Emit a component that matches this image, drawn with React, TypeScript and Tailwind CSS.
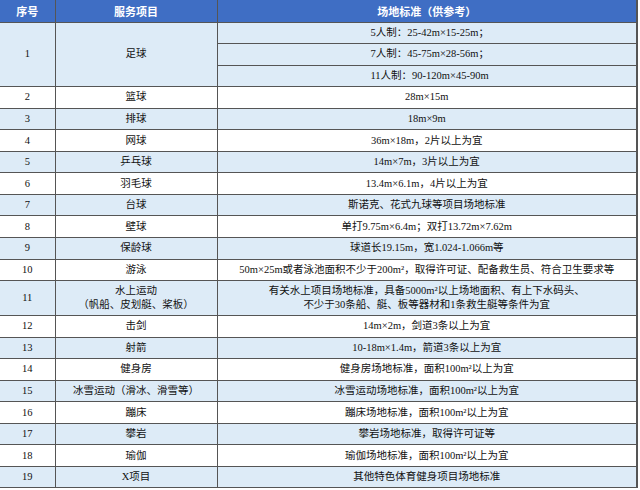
type Row = { no: string; name: React.ReactNode; spec: React.ReactNode; tall?: boolean };

const rows: Row[] = [
  { no: "2", name: "篮球", spec: "28m×15m" },
  { no: "3", name: "排球", spec: "18m×9m" },
  { no: "4", name: "网球", spec: "36m×18m，2片以上为宜" },
  { no: "5", name: "乒乓球", spec: "14m×7m，3片以上为宜" },
  { no: "6", name: "羽毛球", spec: "13.4m×6.1m，4片以上为宜" },
  { no: "7", name: "台球", spec: "斯诺克、花式九球等项目场地标准" },
  { no: "8", name: "壁球", spec: "单打9.75m×6.4m；双打13.72m×7.62m" },
  { no: "9", name: "保龄球", spec: "球道长19.15m，宽1.024-1.066m等" },
  { no: "10", name: "游泳", spec: "50m×25m或者泳池面积不少于200m²，取得许可证、配备救生员、符合卫生要求等" },
  {
    no: "11",
    name: (
      <>
        水上运动
        <br />
        （帆船、皮划艇、桨板）
      </>
    ),
    spec: (
      <>
        有关水上项目场地标准，具备5000m²以上场地面积、有上下水码头、
        <br />
        不少于30条船、艇、板等器材和1条救生艇等条件为宜
      </>
    ),
    tall: true,
  },
  { no: "12", name: "击剑", spec: "14m×2m，剑道3条以上为宜" },
  { no: "13", name: "射箭", spec: "10-18m×1.4m，箭道3条以上为宜" },
  { no: "14", name: "健身房", spec: "健身房场地标准，面积100m²以上为宜" },
  { no: "15", name: "冰雪运动（滑冰、滑雪等）", spec: "冰雪运动场地标准，面积100m²以上为宜" },
  { no: "16", name: "蹦床", spec: "蹦床场地标准，面积100m²以上为宜" },
  { no: "17", name: "攀岩", spec: "攀岩场地标准，取得许可证等" },
  { no: "18", name: "瑜伽", spec: "瑜伽场地标准，面积100m²以上为宜" },
  { no: "19", name: "X项目", spec: "其他特色体育健身项目场地标准" },
];

const cell = "border border-[#555555] text-center align-middle p-0";

export default function App() {
  return (
    <div className="w-[640px] h-[490px] overflow-hidden bg-white">
      <table
        className="w-[638px] border-collapse table-fixed text-[10.5px] leading-[14px] text-[#111111]"
        style={{ fontFamily: '"Liberation Serif", "Noto Sans CJK SC", serif' }}
      >
        <colgroup>
          <col className="w-[55px]" />
          <col className="w-[162px]" />
          <col />
        </colgroup>
        <thead>
          <tr className="h-[22px] bg-[#3f6ec4] text-white font-bold text-[11px]" style={{ fontFamily: '"Noto Sans CJK SC", sans-serif' }}>
            <th className={cell + " border-t-0 border-l-0"}>序号</th>
            <th className={cell + " border-t-0"}>服务项目</th>
            <th className={cell + " border-t-0 border-r-2"}>场地标准（供参考）</th>
          </tr>
        </thead>
        <tbody>
          <tr className="h-[21.55px] bg-[#ddebf7]">
            <td rowSpan={3} className={cell + " border-l-0"}>1</td>
            <td rowSpan={3} className={cell}>足球</td>
            <td className={cell + " text-left pl-[153px] border-r-2"}>5人制：25-42m×15-25m；</td>
          </tr>
          <tr className="h-[21.55px] bg-[#ddebf7]">
            <td className={cell + " text-left pl-[153px] border-r-2"}>7人制：45-75m×28-56m；</td>
          </tr>
          <tr className="h-[21.55px] bg-[#ddebf7]">
            <td className={cell + " text-left pl-[153px] border-r-2"}>11人制：90-120m×45-90m</td>
          </tr>
          {rows.map((r) => (
            <tr
              key={r.no}
              className={(r.tall ? "h-[35px] " : "h-[21.55px] ") + (Number(r.no) % 2 === 1 ? "bg-[#ddebf7]" : "bg-white")}
            >
              <td className={cell + " border-l-0"}>{r.no}</td>
              <td className={cell}>{r.name}</td>
              <td className={cell + " border-r-2"}>{r.spec}</td>
            </tr>
          ))}
        </tbody>
      </table>
    </div>
  );
}
